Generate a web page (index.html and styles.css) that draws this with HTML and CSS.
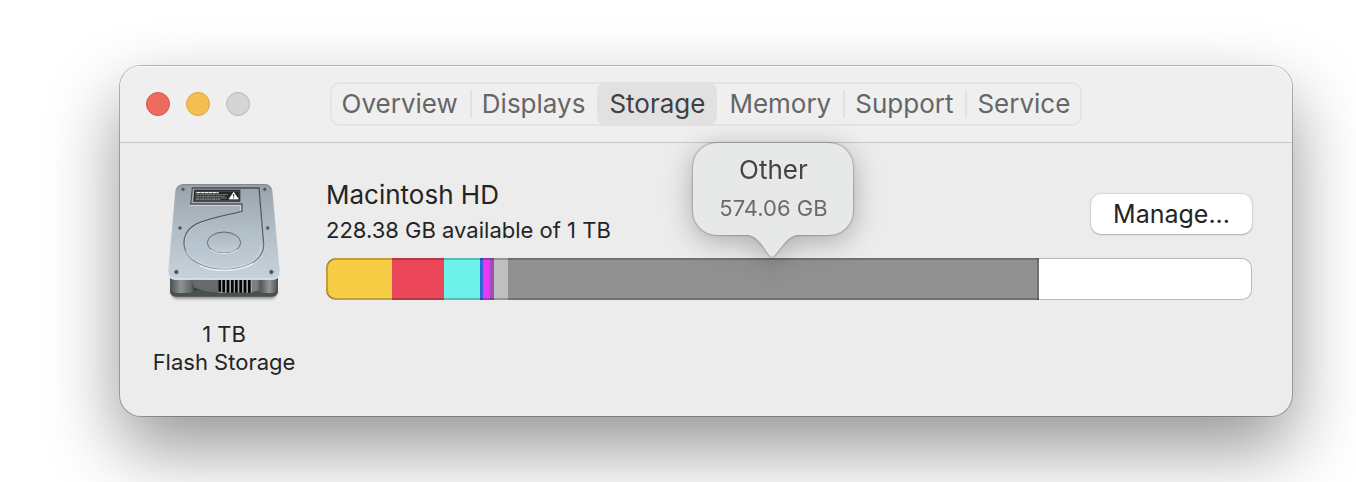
FILE: index.html
```html
<!DOCTYPE html>
<html lang="en">
<head>
    <meta charset="UTF-8">
    <meta name="viewport" content="width=device-width, initial-scale=1.0">
    <title>Storage</title>
    <link rel="stylesheet" href="styles.css">
</head>
<body>
    <main class="window">
        <header class="titlebar">
            <div class="lights">
                <button class="light close" aria-label="Close"></button>
                <button class="light minimize" aria-label="Minimize"></button>
                <button class="light disabled" aria-label="Zoom" disabled></button>
            </div>
            <nav class="tabs">
                <button class="tab">Overview</button>
                <button class="tab">Displays</button>
                <button class="tab active">Storage</button>
                <button class="tab">Memory</button>
                <button class="tab">Support</button>
                <button class="tab">Service</button>
            </nav>
        </header>
        <section class="content">
            <div class="disk">
                <svg class="disk-icon" viewBox="6 21 432 384" aria-hidden="true">
                    <defs>
                        <linearGradient id="plate" x1="0" y1="0" x2="0" y2="1">
                            <stop offset="0" stop-color="#98a2aa"/>
                            <stop offset="0.5" stop-color="#b2bfc8"/>
                            <stop offset="1" stop-color="#c6d3dc"/>
                        </linearGradient>
                        <linearGradient id="base" x1="0" y1="0" x2="1" y2="0">
                            <stop offset="0" stop-color="#4c5050"/>
                            <stop offset="0.1" stop-color="#8d9292"/>
                            <stop offset="0.2" stop-color="#606464"/>
                            <stop offset="0.23" stop-color="#353838"/>
                            <stop offset="0.45" stop-color="#8b8f8f"/>
                            <stop offset="0.8" stop-color="#7c8080"/>
                            <stop offset="0.84" stop-color="#555959"/>
                            <stop offset="0.92" stop-color="#939797"/>
                            <stop offset="1" stop-color="#484c4c"/>
                        </linearGradient>
                        <linearGradient id="groove" x1="0" y1="0" x2="0" y2="1">
                            <stop offset="0" stop-color="#514b4f"/>
                            <stop offset="0.65" stop-color="#62656a"/>
                            <stop offset="1" stop-color="#8c99a2"/>
                        </linearGradient>
                        <linearGradient id="hub" x1="0" y1="0" x2="0" y2="1">
                            <stop offset="0" stop-color="#a9b5be"/>
                            <stop offset="1" stop-color="#c2ced8"/>
                        </linearGradient>
                        <filter id="soft" x="-10%" y="-50%" width="120%" height="200%">
                            <feGaussianBlur stdDeviation="4"/>
                        </filter>
                    </defs>
                    <rect x="64" y="350" width="316" height="36" rx="16" fill="#000" opacity="0.4" filter="url(#soft)"/>
                    <!-- base -->
                    <path d="M60 315H384V360Q384 378 366 378H78Q60 378 60 360Z" fill="url(#base)"/>
                    <path d="M62 358Q66 369 84 369H122Q130 358 140 361L205 367H304L325 361Q330 369 342 369H366Q378 368 384 356V360Q384 380 366 380H78Q60 380 60 360Z" fill="#4a4f4f"/>
                    <path d="M126 330H205V366Q160 366 132 352Z" fill="#656a6a"/>
                    <rect x="204" y="328" width="102" height="40" fill="#a0a4a4"/>
                    <path d="M209 328V365M221 328V367M234 328V368M247 328V368M259 328V368M272 328V368M285 328V368M298 328V368" stroke="#050505" stroke-width="8"/>
                    <!-- top plate -->
                    <path d="M102 42H344Q364 42 367 62L389 304Q391 329 366 329H78Q53 329 55 304L76 62Q80 42 102 42Z" fill="url(#plate)"/>
                    <path d="M55 306Q54 327 78 327H366Q390 327 389 306" fill="none" stroke="#dce5ea" stroke-width="4"/>
                    <path d="M81 58Q86 44 102 44H344Q359 44 363 58" fill="none" stroke="#7c868d" stroke-width="3"/>
                    <!-- raised cover -->
                    <path d="M126 57L121 106H272V126C242 134 187 143 148 161C122 173 102 192 104 225C106 270 159 302 222 302C294 302 346 272 343 222L327 56" fill="none" stroke="#dce6ed" stroke-width="3" opacity="0.8"/>
                    <path d="M327 54H127L122 102H276V124C236 134 187 142 148 158C120 170 101 189 102 222C105 268 159 298 222 298C294 298 344 267 341 220Z" fill="none" stroke="url(#groove)" stroke-width="4"/>
                    <path d="M333 230C332 270 286 293 222 294C165 294 120 269 108 242" fill="none" stroke="#d2dee6" stroke-width="4" opacity="0.7"/>
                    <path d="M148 286C190 307 265 306 310 280" fill="none" stroke="#e8f0f4" stroke-width="4"/>
                    <ellipse cx="222" cy="218" rx="50" ry="32" fill="url(#hub)" stroke="#626a71" stroke-width="3"/>
                    <path d="M182 240Q222 263 262 240" fill="none" stroke="#e4edf3" stroke-width="3"/>
                    <!-- label -->
                    <path d="M133 59H271V95H130Z" fill="#252829"/>
                    <path d="M137 64H267V91H135Z" fill="none" stroke="#8a8e90" stroke-width="1"/>
                    <path d="M139 68H206" stroke="#eee" stroke-width="4" stroke-dasharray="11 1"/>
                    <path d="M139 74H235M139 79H224M138 84H230M138 88H210" stroke="#b4b7b8" stroke-width="2" stroke-dasharray="9 1 5 1"/>
                    <path d="M251 67L265 87H237Z" fill="#fff" stroke="#fff" stroke-width="2"/>
                    <path d="M251 72V80M251 82V85" stroke="#222" stroke-width="3"/>
                    <!-- screws -->
                    <g fill="#424c53" stroke="#7e8c96" stroke-width="3">
                        <circle cx="99" cy="58" r="5"/>
                        <circle cx="344" cy="58" r="5"/>
                        <circle cx="90" cy="174" r="5"/>
                        <circle cx="353" cy="174" r="5"/>
                        <circle cx="79" cy="306" r="6"/>
                        <circle cx="364" cy="306" r="6"/>
                    </g>
                </svg>
                <div>1 TB</div>
                <div>Flash Storage</div>
            </div>
            <div class="volume">
                <div class="volume-header">
                    <div>
                        <h1>Macintosh HD</h1>
                        <p>228.38 GB available of 1 TB</p>
                    </div>
                    <button class="manage">Manage...</button>
                </div>
                <!-- flex-grow is the size in GB -->
                <div class="bar">
                    <div class="segment yellow" style="flex-grow: 71"></div>
                    <div class="segment red" style="flex-grow: 56"></div>
                    <div class="segment cyan" style="flex-grow: 39"></div>
                    <div class="segment blue" style="flex-grow: 4"></div>
                    <div class="segment magenta" style="flex-grow: 7"></div>
                    <div class="segment purple" style="flex-grow: 4"></div>
                    <div class="segment silver" style="flex-grow: 15"></div>
                    <div class="segment other" style="flex-grow: 574.06">
                        <div class="popover" role="tooltip">
                            <div class="popover-body">
                                <div class="popover-title">Other</div>
                                <div class="popover-size">574.06 GB</div>
                            </div>
                            <svg class="popover-tail" viewBox="0 0 64 25" aria-hidden="true">
                                <path d="M0 0V1C12 1 16 6 21 12L28 22Q31 26 34 22L42 12C48 5 52 1 64 1V0Z" fill="#e7e9e8"/>
                            </svg>
                        </div>
                    </div>
                    <div class="segment free" style="flex-grow: 228.38"></div>
                </div>
            </div>
        </section>
    </main>
</body>
</html>
```
FILE: styles.css
```css
:root {
    --window-color: #ececec;
    --titlebar-color: #efefef;
    --text-color: #242424;
    --tab-color: #666;
    --popover-color: #e7e9e8;
    --edge-color: rgba(0, 0, 0, 0.22);
}
* {
    box-sizing: border-box;
}
body {
    margin: 0;
    padding: 66px 64px 66px 120px;
    background-color: #fff;
    font-family: Inter, "Liberation Sans", sans-serif;
    font-size: 22px;
    line-height: 28px;
    color: var(--text-color);
    overflow: hidden;
}
button {
    font-family: inherit;
    font-size: 25px;
    border: none;
    padding: 0;
}
.window {
    background-color: var(--window-color);
    border-radius: 21px;
    box-shadow: 0 0 0 1px rgba(0, 0, 0, 0.26), 0 32px 72px rgba(0, 0, 0, 0.42);
}
.titlebar {
    display: grid;
    grid-template-columns: 1fr auto 1fr;
    align-items: center;
    height: 77px;
    padding: 0 26px;
    background-color: var(--titlebar-color);
    border-bottom: 1px solid #c8c8c8;
    border-radius: 21px 21px 0 0;
    box-shadow: inset 0 1px #fafafa;
}
.lights {
    display: flex;
    gap: 16px;
}
.light {
    width: 24px;
    height: 24px;
    border-radius: 50%;
}
.close {
    background-color: #ed6b5f;
    border: 1px solid #d95549;
}
.minimize {
    background-color: #f5bf4f;
    border: 1px solid #dba33b;
}
.disabled {
    background-color: #d5d5d5;
    border: 1px solid #b9b9b9;
}
.tabs {
    display: flex;
    height: 44px;
    border-radius: 10px;
    box-shadow: inset 0 0 0 2px #e4e4e4;
}
.tab {
    position: relative;
    padding: 0 12px 2px;
    background: none;
    color: var(--tab-color);
    font-size: 26px;
}
.tab.active {
    background-color: #e1e1e1;
    border-radius: 10px;
    color: #404040;
}
/* separators, skipped on both sides of the active tab */
.tab:not(.active) + .tab:not(.active)::before {
    content: "";
    position: absolute;
    left: 0;
    top: 8px;
    bottom: 8px;
    width: 2px;
    background-color: #e2e2e2;
}
.content {
    display: flex;
    gap: 30px;
    padding: 34px 40px 40px 32px;
}
.disk {
    flex: 0 0 144px;
    text-align: center;
    white-space: nowrap;
}
.disk-icon {
    display: block;
    width: 144px;
    height: 128px;
    margin-bottom: 15px;
}
.volume {
    flex: 1;
}
.volume-header {
    display: flex;
    justify-content: space-between;
    align-items: center;
    margin-bottom: 11px;
}
h1 {
    margin: 0;
    font-size: 26px;
    font-weight: 400;
    line-height: 36px;
}
p {
    margin: 0;
    line-height: 34px;
}
.manage {
    height: 40px;
    margin-top: 4px;
    padding: 0 22px;
    background-color: #fff;
    border-radius: 10px;
    box-shadow: 0 0 1px 1px rgba(0, 0, 0, 0.08), 0 1px 2px rgba(0, 0, 0, 0.2);
    color: var(--text-color);
}
.bar {
    display: flex;
    height: 42px;
}
.segment {
    position: relative;
    flex: 0 1 0;
    box-shadow: inset 0 2px var(--edge-color), inset 0 -2px var(--edge-color);
}
.yellow {
    background-color: #f8cd46;
    border-radius: 10px 0 0 10px;
    box-shadow: inset 2px 0 var(--edge-color), inset 0 2px var(--edge-color), inset 0 -2px var(--edge-color);
}
.red { background-color: #ec465a; }
.cyan { background-color: #6df1e8; }
.blue { background-color: #2f66d0; }
.magenta { background-color: #e938f5; }
.purple { background-color: #9c50b5; }
.silver { background-color: #bfbfbf; }
.other {
    background-color: #919191;
    box-shadow: inset -2px 0 var(--edge-color), inset 0 2px var(--edge-color), inset 0 -2px var(--edge-color);
}
.free {
    background-color: #fff;
    border: 1px solid #b8b8b8;
    border-left: none;
    border-radius: 0 10px 10px 0;
    box-shadow: none;
}
.popover {
    position: absolute;
    bottom: 100%;
    left: 50%;
    transform: translateX(-50%);
    filter: drop-shadow(0 0 1px rgba(0, 0, 0, 0.5)) drop-shadow(0 6px 14px rgba(0, 0, 0, 0.28));
}
.popover-body {
    width: 160px;
    padding: 8px 0;
    background-color: var(--popover-color);
    border-radius: 24px;
    text-align: center;
    white-space: nowrap;
}
.popover-title {
    font-size: 26px;
    line-height: 38px;
    color: #444;
}
.popover-size {
    line-height: 38px;
    color: #6a6a6a;
}
.popover-tail {
    display: block;
    width: 64px;
    height: 25px;
    margin: -2px auto 0;
}
```
